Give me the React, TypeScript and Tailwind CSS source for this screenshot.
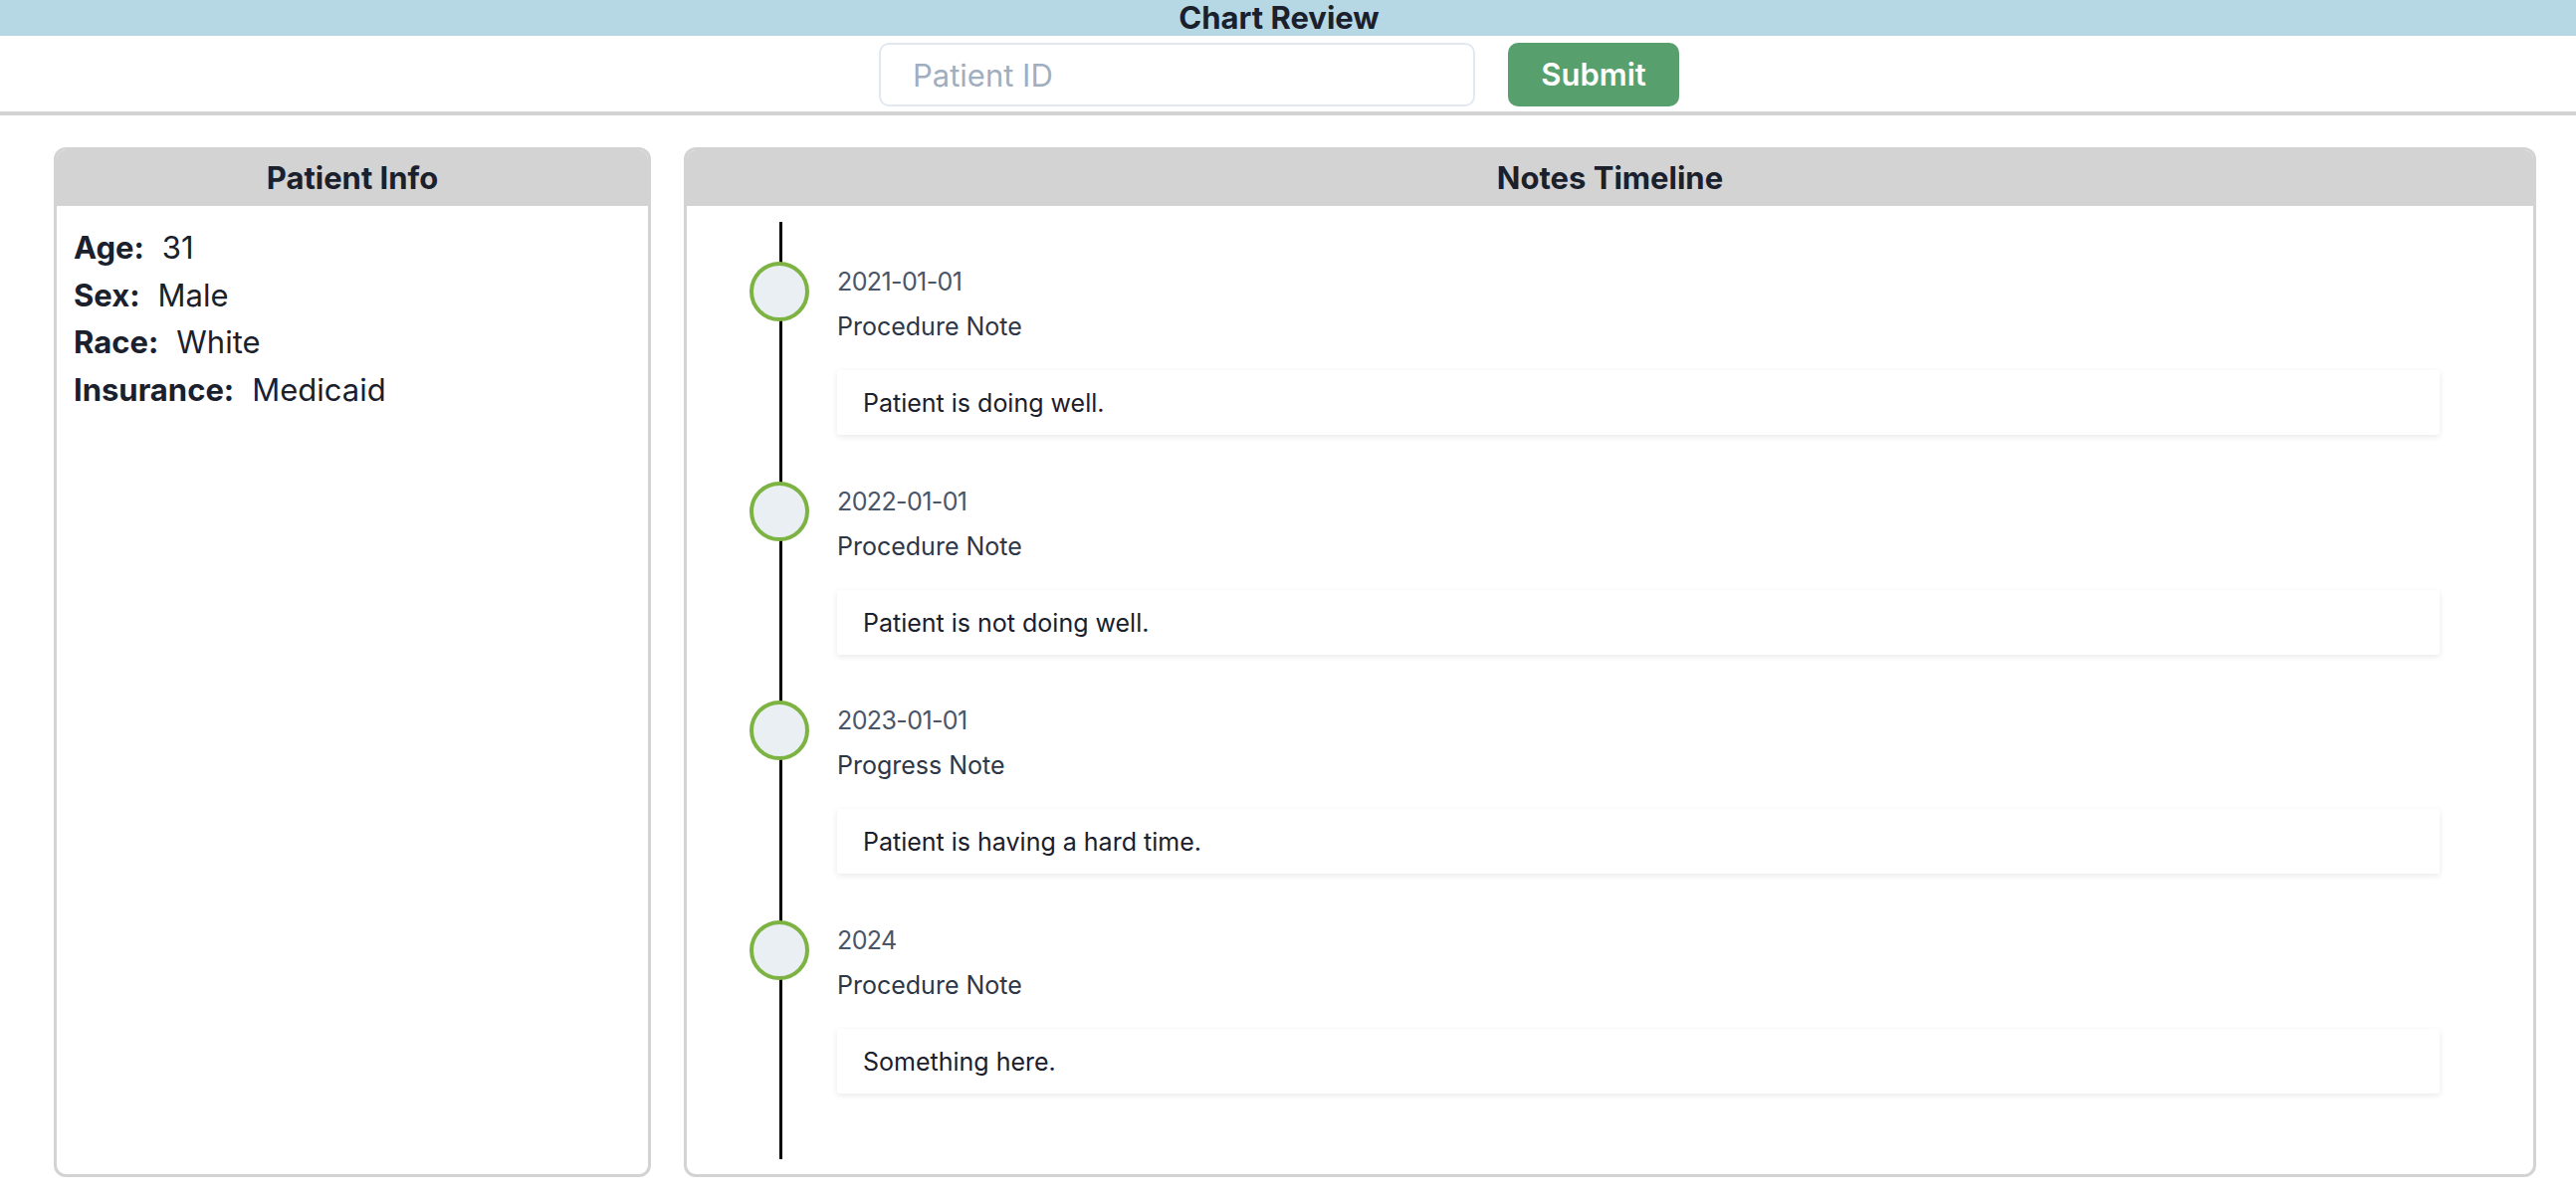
import React from 'react';

/**
 * Chart Review page
 * Patient lookup bar, patient info card and a timeline of notes
 */

interface Note {
  date: string;
  title: string;
  body: string;
}

const notes: Note[] = [
  { date: '2021-01-01', title: 'Procedure Note', body: 'Patient is doing well.' },
  { date: '2022-01-01', title: 'Procedure Note', body: 'Patient is not doing well.' },
  { date: '2023-01-01', title: 'Progress Note', body: 'Patient is having a hard time.' },
  { date: '2024', title: 'Procedure Note', body: 'Something here.' },
];

const patient: [string, string][] = [
  ['Age:', '31'],
  ['Sex:', 'Male'],
  ['Race:', 'White'],
  ['Insurance:', 'Medicaid'],
];

function CardHeader({ title }: { title: string }) {
  return (
    <div className="h-[56px] shrink-0 bg-[#d3d3d3] flex items-center justify-center">
      <h2 className="text-[31px] leading-[36px] font-bold text-[#1a202c]">{title}</h2>
    </div>
  );
}

function TimelineItem({ note }: { note: Note }) {
  return (
    <div className="flex gap-[28px]">
      {/* Dot sits on top of the line */}
      <div className="relative z-10 w-[60px] h-[60px] shrink-0 rounded-full border-[4px] border-[#7cb342] bg-[#e9eff3]" />

      <div className="flex-1 min-w-0">
        <div className="mt-[2px] text-[25px] leading-[36px] tracking-[-0.6px] text-[#4a5568] proportional-nums">
          {note.date}
        </div>
        <div className="mt-[9px] text-[25px] leading-[36px] text-[#2d3748]">{note.title}</div>
        <div className="mt-[26px] pt-[15px] pb-[14px] px-[26px] rounded-[3px] bg-white text-[25px] leading-[36px] text-[#1a202c] shadow-[0_2px_6px_rgba(0,0,0,0.09)]">
          {note.body}
        </div>
      </div>
    </div>
  );
}

export default function App() {
  return (
    <div className="min-h-screen bg-white font-['Inter','Liberation_Sans',sans-serif] text-[#1a202c]">
      {/* Header */}
      <header>
        <h1 className="bg-[#b5d8e4] pr-[18px] text-center text-[31px] leading-[36px] font-bold text-[#1a202c]">
          Chart Review
        </h1>
        <div className="flex justify-center gap-[33px] pt-[7px] pb-[5px] pr-[18px] border-b-4 border-[#d3d3d3]">
          <input
            type="text"
            placeholder="Patient ID"
            className="w-[599px] h-[64px] rounded-[10px] border-2 border-[#e2e8f0] px-[32px] text-[31px] text-[#1a202c] outline-none placeholder:text-[#a0aec0]"
          />
          <button className="w-[172px] h-[64px] rounded-[10px] bg-[#57a06e] text-white text-[31px] font-semibold">
            Submit
          </button>
        </div>
      </header>

      {/* Main content */}
      <main className="flex gap-[33px] pl-[54px] pr-[40px] pt-[32px]">
        {/* Patient Info */}
        <section className="w-[600px] h-[1035px] shrink-0 flex flex-col rounded-[12px] border-[3px] border-[#d3d3d3] overflow-hidden">
          <CardHeader title="Patient Info" />
          <div className="pt-[18px] px-[17px]">
            {patient.map(([label, value]) => (
              <div key={label} className="flex gap-[18px] text-[31px] leading-[47.7px]">
                <span className="font-bold">{label}</span>
                <span>{value}</span>
              </div>
            ))}
          </div>
        </section>

        {/* Notes Timeline */}
        <section className="flex-1 h-[1035px] flex flex-col rounded-[12px] border-[3px] border-[#d3d3d3] overflow-hidden">
          <CardHeader title="Notes Timeline" />
          <div className="flex-1 flex flex-col pt-[16px] pb-[15px] pl-[63px] pr-[94px]">
            <div className="relative flex-1 flex flex-col gap-[46.5px] pt-[40px]">
              <div className="absolute top-0 bottom-0 left-[30px] w-[3px] bg-black" />
              {notes.map((note) => (
                <TimelineItem key={note.date} note={note} />
              ))}
            </div>
          </div>
        </section>
      </main>
    </div>
  );
}
